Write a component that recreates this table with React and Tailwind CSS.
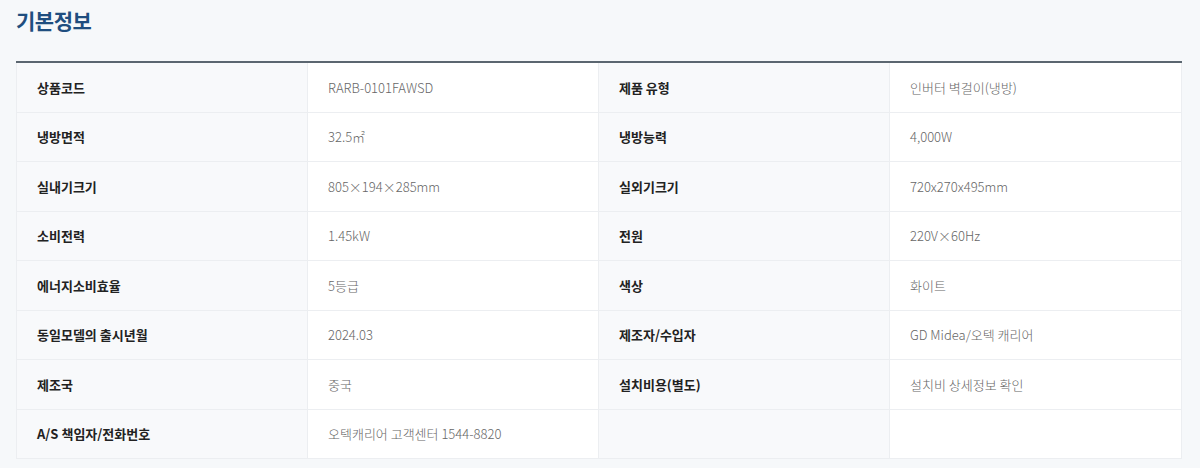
import React from "react";

const rows = [
  ["상품코드", "RARB-0101FAWSD", "제품 유형", "인버터 벽걸이(냉방)"],
  ["냉방면적", "32.5㎡", "냉방능력", "4,000W"],
  ["실내기크기", "805×194×285mm", "실외기크기", "720x270x495mm"],
  ["소비전력", "1.45kW", "전원", "220V×60Hz"],
  ["에너지소비효율", "5등급", "색상", "화이트"],
  ["동일모델의 출시년월", "2024.03", "제조자/수입자", "GD Midea/오텍 캐리어"],
  ["제조국", "중국", "설치비용(별도)", "설치비 상세정보 확인"],
  ["A/S 책임자/전화번호", "오텍캐리어 고객센터 1544-8820", "", ""],
];

const font = {
  fontFamily: '"Noto Sans CJK KR", "Noto Sans", sans-serif',
};

function Label({ children }) {
  return (
    <div className="flex h-[49.5px] items-center border-b border-r border-[#eceef1] bg-[#f8f9fb] pl-5 text-[13px] font-bold text-[#222]">
      {children}
    </div>
  );
}

function Value({ children, last }) {
  return (
    <div
      className={
        last
          ? "flex h-[49.5px] items-center border-b border-[#eceef1] bg-white pl-5 text-[13px] font-light text-[#666]"
          : "flex h-[49.5px] items-center border-b border-r border-[#eceef1] bg-white pl-5 text-[13px] font-light text-[#666]"
      }
    >
      {children}
    </div>
  );
}

export default function App() {
  return (
    <div className="h-[468px] w-[1200px] bg-[#f6f8fa] px-4" style={font}>
      <h2 className="pt-[5px] text-[21px] font-bold leading-[30px] tracking-[-0.5px] text-[#1f4e7f]">
        기본정보
      </h2>
      {/* spec table */}
      <div className="mt-[26px] w-[1166px] border-t-2 border-[#5b6670]">
        <div className="grid grid-cols-4 border-l border-r border-[#eceef1]">
          {rows.map((r, i) => (
            <React.Fragment key={i}>
              <Label>{r[0]}</Label>
              <Value>{r[1]}</Value>
              <Label>{r[2]}</Label>
              <Value last>{r[3]}</Value>
            </React.Fragment>
          ))}
        </div>
      </div>
    </div>
  );
}
